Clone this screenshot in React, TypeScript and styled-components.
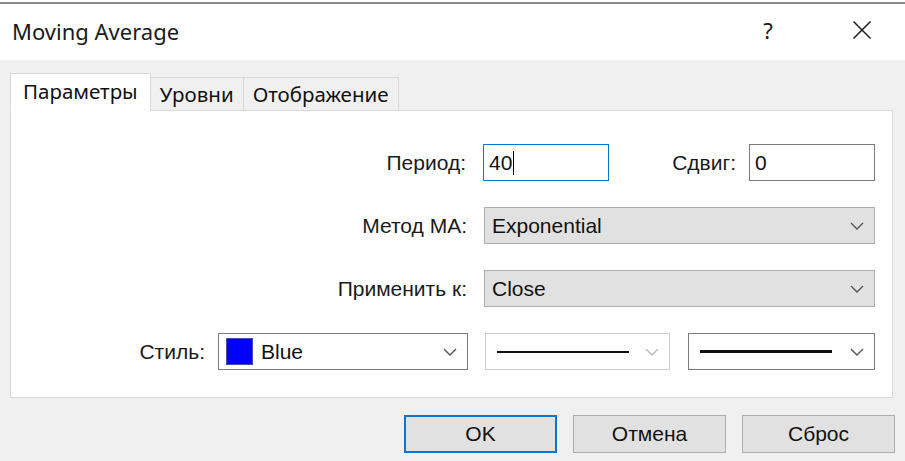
import React from 'react';
import styled, { createGlobalStyle } from 'styled-components';

const GlobalStyle = createGlobalStyle`
  html, body {
    margin: 0;
    padding: 0;
    background: #ffffff;
  }
  * {
    box-sizing: border-box;
  }
`;

// окно диалога
const Window = styled.div`
  width: 905px;
  height: 461px;
  display: flex;
  flex-direction: column;
  overflow: hidden;
  background: #f0f0f0;
`;

// край окна позади
const TopEdge = styled.div`
  height: 4px;
  background: #ffffff;
  border-bottom: 2px solid #8a8a8a;
  flex-shrink: 0;
`;

const TitleBar = styled.div`
  height: 56px;
  background: #ffffff;
  display: flex;
  align-items: center;
  padding-left: 12px;
  flex-shrink: 0;
`;

const Title = styled.div`
  font-family: "Noto Sans", "Open Sans", sans-serif;
  font-size: 22px;
  color: #1a1a1a;
  flex: 1;
  margin-top: -2px;
`;

const HelpMark = styled.div`
  font-family: "Noto Sans", "Open Sans", sans-serif;
  font-size: 22px;
  color: #1a1a1a;
  width: 20px;
  text-align: center;
  margin-right: 74px;
  margin-top: -4px;
`;

const CloseBox = styled.div`
  width: 20px;
  height: 20px;
  margin-right: 33px;
  margin-top: -4px;
  display: flex;
  align-items: center;
  justify-content: center;
`;

const Body = styled.div`
  flex: 1;
  padding: 12px 10px 0 10px;
  display: flex;
  flex-direction: column;
`;

const TabStrip = styled.div`
  display: flex;
  align-items: flex-end;
  height: 38px;
  position: relative;
  z-index: 1;
`;

const Tab = styled.div<{ active?: boolean }>`
  font-family: "Noto Sans", "Open Sans", sans-serif;
  font-size: 20.5px;
  color: #111;
  height: ${p => (p.active ? '38px' : '34px')};
  padding: ${p => (p.active ? '0 12px' : '0 9px')};
  display: flex;
  align-items: center;
  background: ${p => (p.active ? '#ffffff' : '#f0f0f0')};
  border: 1px solid #d9d9d9;
  border-bottom: ${p => (p.active ? '1px solid #ffffff' : '1px solid #d9d9d9')};
  margin-bottom: -1px;
  margin-left: ${p => (p.active ? '0' : '-1px')};
  padding-bottom: ${p => (p.active ? '3px' : '0')};
`;

const Panel = styled.div`
  height: 288px;
  background: #ffffff;
  border: 1px solid #d9d9d9;
  margin-right: 2px;
  padding: 33px 17px 0 0;
  display: flex;
  flex-direction: column;
  gap: 26px;
`;

const Row = styled.div`
  display: flex;
  justify-content: flex-end;
  align-items: center;
  height: 37px;
`;

const Label = styled.div<{ gap?: number; w?: number }>`
  font-family: "Liberation Sans", Arial, sans-serif;
  font-size: 21px;
  color: #1a1a1a;
  margin-right: ${p => p.gap ?? 17}px;
  width: ${p => (p.w ? `${p.w}px` : 'auto')};
  text-align: right;
  white-space: nowrap;
`;

const TextBox = styled.div<{ focused?: boolean; w: number }>`
  width: ${p => p.w}px;
  height: 37px;
  border: 1px solid ${p => (p.focused ? '#0078d7' : '#7a7a7a')};
  background: #ffffff;
  display: flex;
  align-items: center;
  padding-left: 5px;
  font-family: "Liberation Sans", Arial, sans-serif;
  font-size: 21px;
  color: #111;
`;

const Caret = styled.span`
  display: inline-block;
  width: 1px;
  height: 24px;
  background: #000;
  margin-left: 1px;
`;

const Select = styled.div<{ w: number; variant?: 'grey' | 'white' | 'disabled'; ml?: number }>`
  width: ${p => p.w}px;
  height: 37px;
  margin-left: ${p => p.ml ?? 0}px;
  border: 1px solid
    ${p => (p.variant === 'grey' ? '#adadad' : p.variant === 'disabled' ? '#cccccc' : '#7a7a7a')};
  background: ${p => (p.variant === 'grey' ? '#e1e1e1' : '#ffffff')};
  display: flex;
  align-items: center;
  padding: 0 10px 0 7px;
  font-family: "Liberation Sans", Arial, sans-serif;
  font-size: 21px;
  color: #111;
`;

const SelectText = styled.span`
  flex: 1;
`;

const Swatch = styled.span`
  width: 27px;
  height: 27px;
  background: #0000ff;
  border: 1px solid #4a4aa8;
  margin-right: 8px;
  flex-shrink: 0;
`;

const LineSample = styled.span<{ thick: number; w: number }>`
  width: ${p => p.w}px;
  height: ${p => p.thick}px;
  background: #111;
  margin-left: 4px;
`;

const Spacer = styled.span`
  flex: 1;
`;

const ButtonRow = styled.div`
  display: flex;
  justify-content: flex-end;
  gap: 16px;
  margin-top: 17px;
`;

const Button = styled.div<{ primary?: boolean }>`
  width: 153px;
  height: 38px;
  background: #e1e1e1;
  border: ${p => (p.primary ? '2px solid #0078d7' : '1px solid #adadad')};
  display: flex;
  align-items: center;
  justify-content: center;
  font-family: "Liberation Sans", Arial, sans-serif;
  font-size: 21px;
  color: #111;
`;

const Chevron: React.FC<{ color?: string }> = ({ color = '#555' }) => (
  <svg width="14" height="8" viewBox="0 0 14 8">
    <path d="M1 1 L7 7 L13 1" fill="none" stroke={color} strokeWidth="1.4" />
  </svg>
);

const CloseIcon = () => (
  <svg width="20" height="20" viewBox="0 0 20 20">
    <path d="M1.5 1.5 L18.5 18.5 M18.5 1.5 L1.5 18.5" stroke="#1a1a1a" strokeWidth="1.5" />
  </svg>
);

const App: React.FC = () => {
  return (
    <>
      <GlobalStyle />
      <Window>
        <TopEdge />
        <TitleBar>
          <Title>Moving Average</Title>
          <HelpMark>?</HelpMark>
          <CloseBox>
            <CloseIcon />
          </CloseBox>
        </TitleBar>
        <Body>
          <TabStrip>
            <Tab active>Параметры</Tab>
            <Tab>Уровни</Tab>
            <Tab>Отображение</Tab>
          </TabStrip>
          <Panel>
            <Row>
              <Label>Период:</Label>
              <TextBox focused w={126}>
                40
                <Caret />
              </TextBox>
              <Label w={127} gap={13}>
                Сдвиг:
              </Label>
              <TextBox w={126}>0</TextBox>
            </Row>
            <Row>
              <Label>Метод MA:</Label>
              <Select w={391} variant="grey">
                <SelectText>Exponential</SelectText>
                <Chevron />
              </Select>
            </Row>
            <Row>
              <Label>Применить к:</Label>
              <Select w={391} variant="grey">
                <SelectText>Close</SelectText>
                <Chevron />
              </Select>
            </Row>
            <Row>
              <Label gap={13}>Стиль:</Label>
              <Select w={250}>
                <Swatch />
                <SelectText>Blue</SelectText>
                <Chevron />
              </Select>
              <Select w={185} variant="disabled" ml={17}>
                <LineSample thick={2} w={132} />
                <Spacer />
                <Chevron color="#bbbbbb" />
              </Select>
              <Select w={187} ml={18}>
                <LineSample thick={3} w={132} />
                <Spacer />
                <Chevron />
              </Select>
            </Row>
          </Panel>
          <ButtonRow>
            <Button primary>OK</Button>
            <Button>Отмена</Button>
            <Button>Сброс</Button>
          </ButtonRow>
        </Body>
      </Window>
    </>
  );
};

export default App;
